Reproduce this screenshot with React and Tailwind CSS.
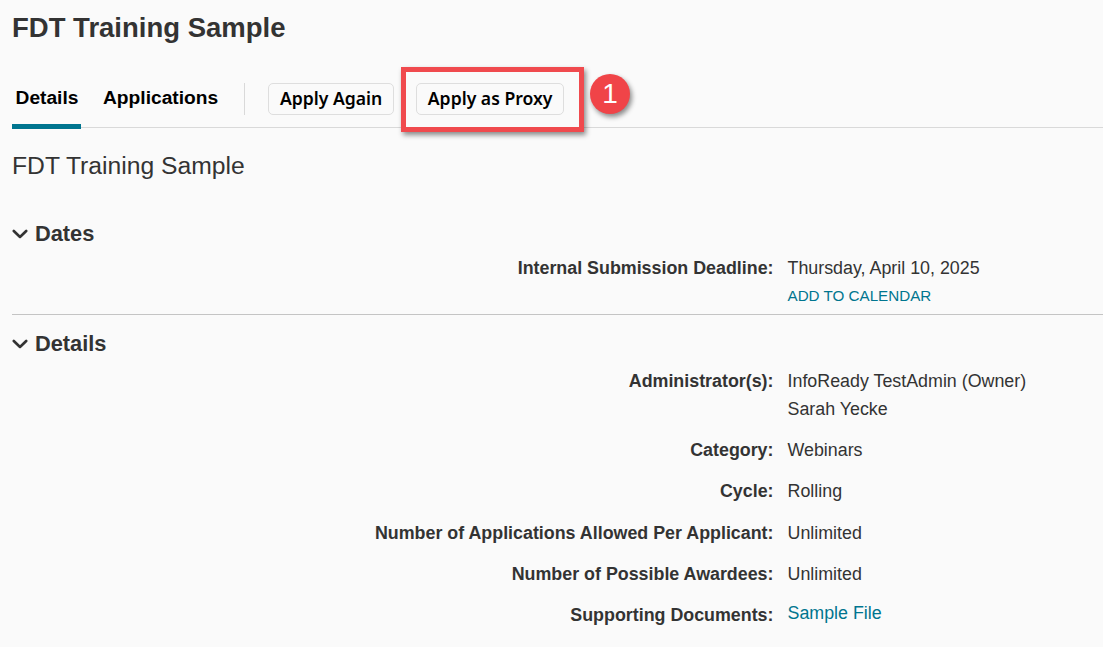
const labelCls = "w-[773.5px] shrink-0 text-right font-bold text-[17.85px] leading-[20px] text-[#333]";
function Row({ label, values, mt, link }) {
  return (
    <div className={`flex ${mt}`}>
      <div className={labelCls}>{label}</div>
      <div className="ml-[14px] text-[17.85px] text-[#333]">
        {values.map((v, i) => (
          <div key={v} className={`leading-[20px] ${i > 0 ? "mt-[8px]" : ""} ${link ? "-mt-[2px] text-[#00758f]" : ""}`}>{v}</div>
        ))}
      </div>
    </div>
  );
}
function Chevron() {
  return (
    <svg width="16" height="16" viewBox="0 0 16 16" className="shrink-0" fill="none" stroke="#333" strokeWidth="2.6" strokeLinecap="round" strokeLinejoin="round">
      <path d="M1.8 5 L8 11 L14.2 5" />
    </svg>
  );
}
function Section({ title }) {
  return (
    <div className="flex h-[26px] items-center gap-[7px]">
      <Chevron />
      <h2 className="text-[21.8px] leading-[26px] font-bold text-[#333]">{title}</h2>
    </div>
  );
}
export default function App() {
  return (
    <div className="relative h-[647px] w-[1103px] overflow-hidden bg-[#fafafa] font-['Liberation_Sans',Arial,sans-serif]">
      <div className="pl-[12px]">
        <h1 className="pt-[12px] text-[27.5px] leading-[32px] font-bold text-[#333]">FDT Training Sample</h1>
        <div className="mt-[22px] flex h-[62px] items-start border-b border-[#d9d9d9]">
          <div className="relative flex h-[62px] w-[70px] justify-center pt-[21px] text-[19.2px] leading-[22px] font-bold text-black">
            Details
            <div className="absolute bottom-[-1px] left-0 h-[5px] w-[69px] bg-[#00758f]" />
          </div>
          <div className="ml-[21px] pt-[21px] text-[19.2px] leading-[22px] font-bold text-black">Applications</div>
          <div className="ml-[26px] mt-[17px] h-[32px] w-px bg-[#d9d9d9]" />
          <button className="ml-[23px] mt-[17px] h-[32px] w-[126px] rounded-[5px] border border-[#dedede] bg-[#fafafa] pb-[2px] font-['Noto_Sans',sans-serif] text-[17.6px] font-semibold text-black">Apply Again</button>
          <button className="ml-[22px] mt-[17px] h-[32px] w-[148px] rounded-[5px] border border-[#dedede] bg-[#fafafa] pb-[2px] font-['Noto_Sans',sans-serif] text-[17.6px] font-semibold text-black">Apply as Proxy</button>
        </div>
        <h2 className="mt-[23px] text-[24.7px] leading-[30px] text-[#333]">FDT Training Sample</h2>
      </div>
      <div className="mt-[40px] pl-[12px]">
        <Section title="Dates" />
      </div>
      <div className="mt-[11px] flex">
        <div className={labelCls}>Internal Submission Deadline:</div>
        <div className="ml-[14px]">
          <div className="text-[17.85px] leading-[20px] text-[#333]">Thursday, April 10, 2025</div>
          <div className="mt-[8px] text-[15.2px] leading-[20px] text-[#00758f]">ADD TO CALENDAR</div>
        </div>
      </div>
      <div className="mt-[8px] ml-[12px] border-t border-[#c4c4c4]" />
      <div className="mt-[16px] pl-[12px]">
        <Section title="Details" />
      </div>
      <Row mt="mt-[14px]" label="Administrator(s):" values={["InfoReady TestAdmin (Owner)", "Sarah Yecke"]} />
      <Row mt="mt-[21px]" label="Category:" values={["Webinars"]} />
      <Row mt="mt-[21px]" label="Cycle:" values={["Rolling"]} />
      <Row mt="mt-[22px]" label="Number of Applications Allowed Per Applicant:" values={["Unlimited"]} />
      <Row mt="mt-[21px]" label="Number of Possible Awardees:" values={["Unlimited"]} />
      <Row mt="mt-[21px]" label="Supporting Documents:" values={["Sample File"]} link />

      <div className="absolute left-[401px] top-[67px] h-[65px] w-[183px] border-[5px] border-[#f04a4e] shadow-[2px_3px_5px_rgba(0,0,0,0.45)]" />
      <div className="absolute left-[590px] top-[74px] flex h-[40px] w-[40px] items-center justify-center rounded-full bg-[#f04448] text-[28px] text-white shadow-[2px_3px_5px_rgba(0,0,0,0.45)]">1</div>
    </div>
  );
}
